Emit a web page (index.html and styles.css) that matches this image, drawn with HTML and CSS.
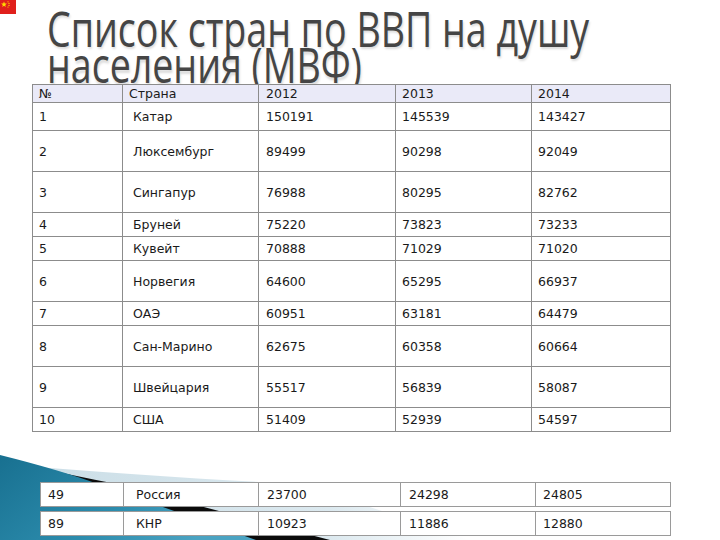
FILE: index.html
```html
<!DOCTYPE html>
<html lang="ru">
<head>
<meta charset="utf-8">
<title>Список стран по ВВП на душу населения (МВФ)</title>
<link rel="stylesheet" href="styles.css">
</head>
<body>
<div class="slide">
  <svg class="decor" width="720" height="540" viewBox="0 0 720 540" aria-hidden="true">
    <defs>
      <linearGradient id="teal" x1="0" y1="0" x2="1" y2="0.4">
        <stop offset="0" stop-color="#187090"/>
        <stop offset="0.6" stop-color="#2c8cad"/>
        <stop offset="1" stop-color="#4aa3c2"/>
      </linearGradient>
      <linearGradient id="pale" x1="0" y1="0" x2="1" y2="0">
        <stop offset="0" stop-color="#c9dde6"/>
        <stop offset="0.7" stop-color="#dce9ef"/>
        <stop offset="1" stop-color="#ffffff"/>
      </linearGradient>
    </defs>
    <path d="M0,464 Q170,478 300,484 L470,540 L0,540 Z" fill="url(#pale)"/>
    <path d="M30,466 Q80,477 112,483 L330,540 L190,540 Z" fill="#0b0b0b"/>
    <path d="M0,455 Q60,470 98,484 L256,540 L0,540 Z" fill="url(#teal)"/>
  </svg>

  <div class="flag" aria-hidden="true">
    <svg width="16" height="14" viewBox="0 0 16 14">
      <rect width="16" height="14" fill="#e0201c"/>
      <polygon points="4,1.6 4.8,3.6 6.9,3.6 5.2,4.9 5.8,7 4,5.7 2.2,7 2.8,4.9 1.1,3.6 3.2,3.6" fill="#ffde00"/>
      <circle cx="8" cy="1.8" r="0.6" fill="#ffde00"/>
      <circle cx="9" cy="3.4" r="0.6" fill="#ffde00"/>
      <circle cx="9" cy="5.4" r="0.6" fill="#ffde00"/>
      <circle cx="8" cy="7" r="0.6" fill="#ffde00"/>
    </svg>
  </div>

  <header class="title-wrap">
    <h1 class="title">Список стран по ВВП на душу<br>населения (МВФ)</h1>
  </header>

  <table class="gdp">
    <colgroup>
      <col class="c1"><col class="c2"><col class="c3"><col class="c4"><col class="c5">
    </colgroup>
    <tr class="head"><td>№</td><td>Страна</td><td>2012</td><td>2013</td><td>2014</td></tr>
    <tr class="rm"><td>1</td><td class="name">Катар</td><td>150191</td><td>145539</td><td>143427</td></tr>
    <tr class="rl"><td>2</td><td class="name">Люксембург</td><td>89499</td><td>90298</td><td>92049</td></tr>
    <tr class="rl"><td>3</td><td class="name">Сингапур</td><td>76988</td><td>80295</td><td>82762</td></tr>
    <tr class="rs"><td>4</td><td class="name">Бруней</td><td>75220</td><td>73823</td><td>73233</td></tr>
    <tr class="rs"><td>5</td><td class="name">Кувейт</td><td>70888</td><td>71029</td><td>71020</td></tr>
    <tr class="rl"><td>6</td><td class="name">Норвегия</td><td>64600</td><td>65295</td><td>66937</td></tr>
    <tr class="rs"><td>7</td><td class="name">ОАЭ</td><td>60951</td><td>63181</td><td>64479</td></tr>
    <tr class="rl"><td>8</td><td class="name">Сан-Марино</td><td>62675</td><td>60358</td><td>60664</td></tr>
    <tr class="rl"><td>9</td><td class="name">Швейцария</td><td>55517</td><td>56839</td><td>58087</td></tr>
    <tr class="rs"><td>10</td><td class="name">США</td><td>51409</td><td>52939</td><td>54597</td></tr>
  </table>

  <div class="extra">
    <table class="one">
      <colgroup>
        <col class="e1"><col class="e2"><col class="e3"><col class="e4"><col class="e5">
      </colgroup>
      <tr><td>49</td><td class="name">Россия</td><td>23700</td><td>24298</td><td>24805</td></tr>
    </table>
    <table class="one">
      <colgroup>
        <col class="e1"><col class="e2"><col class="e3"><col class="e4"><col class="e5">
      </colgroup>
      <tr><td>89</td><td class="name">КНР</td><td>10923</td><td>11886</td><td>12880</td></tr>
    </table>
  </div>
</div>
</body>
</html>
```

FILE: styles.css
```css
html, body {
  margin: 0;
  padding: 0;
  background: #ffffff;
}

.slide {
  position: relative;
  width: 720px;
  height: 540px;
  overflow: hidden;
  font-family: "DejaVu Sans", "Noto Sans", sans-serif;
}

.decor {
  position: absolute;
  left: 0;
  top: 0;
  z-index: 0;
}

.flag {
  position: absolute;
  left: 0;
  top: 0;
  width: 16px;
  height: 14px;
  z-index: 2;
}

.flag svg {
  display: block;
}

.title-wrap {
  position: relative;
  z-index: 1;
  box-sizing: border-box;
  height: 84px;
  padding: 10px 0 0 47px;
}

.title {
  margin: 0;
  font-family: "Open Sans", "DejaVu Sans", sans-serif;
  font-weight: 400;
  font-size: 37.6px;
  line-height: 27.7px;
  color: #454545;
  white-space: nowrap;
  transform: scaleY(1.31);
  transform-origin: 0 0;
  text-shadow: 1px 2px 2px rgba(0, 0, 0, 0.14);
}

table {
  position: relative;
  z-index: 1;
  border-collapse: collapse;
  table-layout: fixed;
  background: #ffffff;
  font-size: 12.5px;
  color: #1a1a1a;
}

td {
  border: 1px solid #8c8c8c;
  padding: 0 0 0 6px;
  vertical-align: middle;
  white-space: nowrap;
  overflow: hidden;
}

.gdp {
  margin-left: 32px;
  width: 638px;
}

.gdp .c1 { width: 90px; }
.gdp .c2 { width: 136px; }
.gdp .c3 { width: 137px; }
.gdp .c4 { width: 136px; }
.gdp .c5 { width: 139px; }

.gdp td:nth-child(3) { padding-left: 7px; }

.gdp .name { padding-left: 10px; }

.head td {
  background: #eaeaf8;
}

.head { height: 18px; }
.rm { height: 28px; }
.rl { height: 41px; }
.rs { height: 24px; }

.extra {
  display: flex;
  flex-direction: column;
  gap: 4px;
  margin: 50px 0 0 40px;
}

.one {
  width: 630px;
}

.one tr { height: 24px; }

.one td {
  border-color: #9a9a9a;
  padding-left: 7px;
}

.one .name { padding-left: 12px; }
.one td:nth-child(3) { padding-left: 8px; }
.one td:nth-child(4) { padding-left: 8px; }

.one .e1 { width: 83px; }
.one .e2 { width: 135px; }
.one .e3 { width: 142px; }
.one .e4 { width: 135px; }
.one .e5 { width: 135px; }
```
